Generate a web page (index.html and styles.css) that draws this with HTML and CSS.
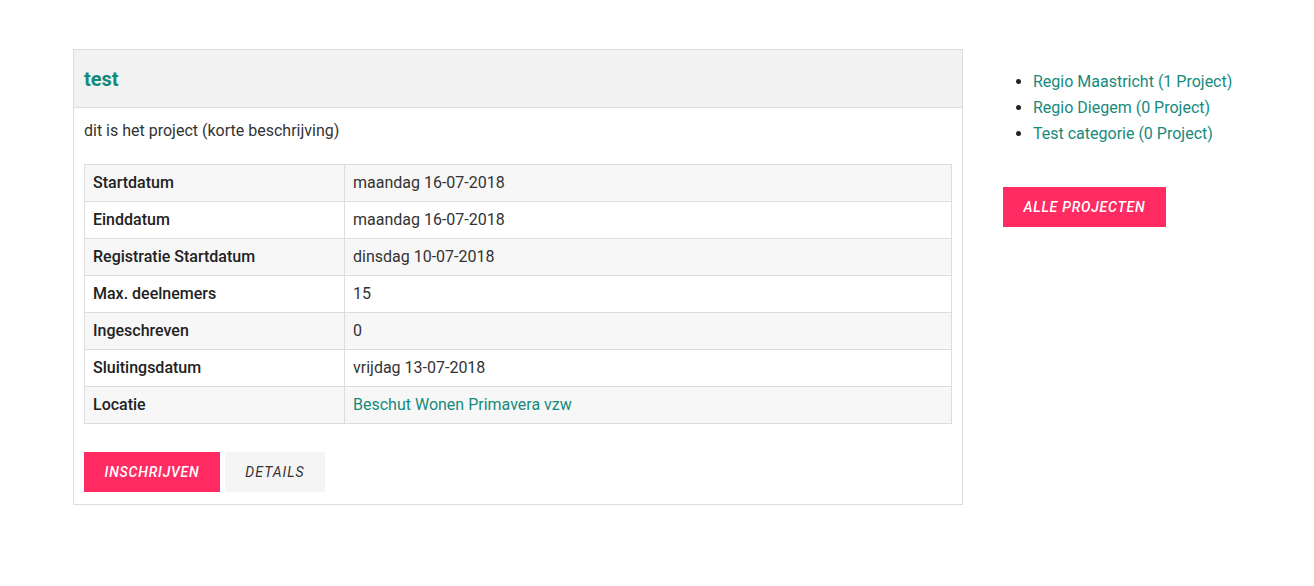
FILE: index.html
```html
<!DOCTYPE html>
<html>
<head>
<meta charset="utf-8">
<link rel="stylesheet" href="styles.css">
</head>
<body>
<div class="page">
  <main class="card">
    <div class="card-header"><h2 class="title">test</h2></div>
    <div class="card-body">
      <p class="desc">dit is het project (korte beschrijving)</p>
      <table class="info">
        <tr><th>Startdatum</th><td>maandag 16-07-2018</td></tr>
        <tr><th>Einddatum</th><td>maandag 16-07-2018</td></tr>
        <tr><th>Registratie Startdatum</th><td>dinsdag 10-07-2018</td></tr>
        <tr><th>Max. deelnemers</th><td>15</td></tr>
        <tr><th>Ingeschreven</th><td>0</td></tr>
        <tr><th>Sluitingsdatum</th><td>vrijdag 13-07-2018</td></tr>
        <tr><th>Locatie</th><td><a class="link" href="#">Beschut Wonen Primavera vzw</a></td></tr>
      </table>
      <div class="actions">
        <a class="btn btn-primary" href="#">Inschrijven</a>
        <a class="btn btn-light" href="#">Details</a>
      </div>
    </div>
  </main>
  <aside class="sidebar">
    <ul class="cats">
      <li><a class="link" href="#">Regio Maastricht (1 Project)</a></li>
      <li><a class="link" href="#">Regio Diegem (0 Project)</a></li>
      <li><a class="link" href="#">Test categorie (0 Project)</a></li>
    </ul>
    <a class="btn btn-primary btn-all" href="#">Alle projecten</a>
  </aside>
</div>
</body>
</html>
```
FILE: styles.css
```css
* { box-sizing: border-box; }
body {
  margin: 0;
  font-family: Roboto, "Liberation Sans", sans-serif;
  color: #333;
  background: #fff;
}
.page {
  display: flex;
  align-items: flex-start;
  gap: 40px;
  padding: 49px 0 0 73px;
}
.card {
  width: 890px;
  border: 1px solid #ddd;
}
.card-header {
  background: #f2f2f2;
  border-bottom: 1px solid #ddd;
  height: 58px;
  display: flex;
  align-items: center;
  padding: 0 10px;
}
.title {
  margin: 0;
  font-size: 20px;
  font-weight: 700;
  color: #148a78;
}
.card-body {
  padding: 12px 10px 12px 10px;
}
.desc {
  margin: 0 0 22px;
  font-size: 16px;
  line-height: 22px;
}
.info {
  width: 100%;
  border-collapse: collapse;
  font-size: 16px;
}
.info th, .info td {
  border: 1px solid #ddd;
  height: 37px;
  padding: 0 8px 1px;
  text-align: left;
  vertical-align: middle;
}
.info th {
  width: 260px;
  font-weight: 500;
  color: #222;
}
.info td { color: #333; }
.info tr:nth-child(odd) { background: #f7f7f7; }
.link {
  color: #168a7c;
  text-decoration: none;
}
.actions {
  display: flex;
  gap: 5px;
  margin-top: 28px;
}
.btn {
  display: inline-flex;
  align-items: center;
  justify-content: center;
  height: 40px;
  font-size: 14px;
  font-style: italic;
  font-weight: 400;
  text-transform: uppercase;
  letter-spacing: 1px;
  text-decoration: none;
}
.btn-primary {
  background: #ff2b62;
  color: #fff;
  width: 136px;
  font-weight: 500;
  letter-spacing: 0.8px;
}
.btn-light {
  background: #f5f5f5;
  color: #333;
  width: 100px;
}
.sidebar {
  padding-top: 20px;
}
.cats {
  margin: 0;
  padding-left: 30px;
  font-size: 16px;
  line-height: 26px;
  color: #222;
}
.btn-all {
  width: 163px;
  margin-top: 40px;
}
```
